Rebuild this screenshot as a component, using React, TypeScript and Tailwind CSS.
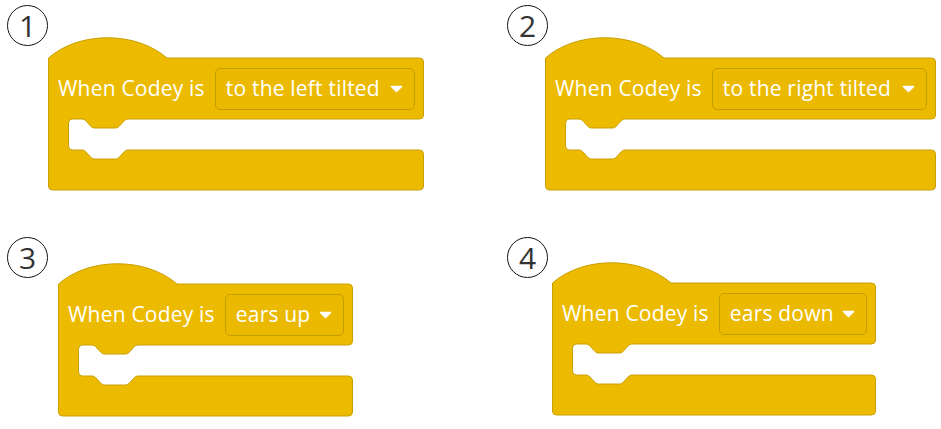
import type { ReactNode } from "react";

const FILL = "#ECBB00";
const EDGE = "#C9A000";

// hat block outline with a C-shaped mouth, body top sits 21px below the svg top
function blockPath(w: number) {
  const R = w - 0.5;
  return [
    "M0.5 21",
    "C31 -6 88 -6 119 21",
    `H${R - 4}`,
    `A4 4 0 0 1 ${R} 25`,
    "V78",
    `A4 4 0 0 1 ${R - 4} 82`,
    "H80",
    "Q78 82 76.5 83.5",
    "L71 89.5",
    "Q69.5 91 67.5 91",
    "H46.5",
    "Q44.5 91 43 89.5",
    "L37.5 83.5",
    "Q36 82 34 82",
    "H24.5",
    "A4 4 0 0 0 20.5 86",
    "V109",
    "A4 4 0 0 0 24.5 113",
    "H34",
    "Q36 113 37.5 114.5",
    "L43 120.5",
    "Q44.5 122 46.5 122",
    "H67.5",
    "Q69.5 122 71 120.5",
    "L76.5 114.5",
    "Q78 113 80 113",
    `H${R - 4}`,
    `A4 4 0 0 1 ${R} 117`,
    "V149",
    `A4 4 0 0 1 ${R - 4} 153`,
    "H4.5",
    "A4 4 0 0 1 0.5 149",
    "Z",
  ].join(" ");
}

function Num({ n }: { n: number }) {
  return (
    <div className="w-[41px] h-[41px] flex-none rounded-full border-[1.5px] border-[#111] flex items-center justify-center text-[30px] leading-none text-[#333] font-['Open_Sans',sans-serif]">
      {n}
    </div>
  );
}

function HatBlock({ width, option }: { width: number; option: string }) {
  return (
    <div className="relative flex-none h-[154px]" style={{ width: width + 1 }}>
      <svg className="absolute inset-0" width={width + 1} height={154} viewBox={`0 0 ${width + 1} 154`}>
        <path d={blockPath(width)} fill={FILL} stroke={EDGE} strokeWidth={1} strokeLinejoin="round" />
      </svg>
      <div className="relative flex items-center gap-[10px] pt-[31px] pl-[10px] pr-[10px] font-['Open_Sans',sans-serif] text-[21px] tracking-[0.2px] text-white">
        <span className="flex-none whitespace-nowrap">When Codey is</span>
        <div className="flex-1 h-[42px] flex items-center justify-between pl-[10px] pr-[11px] rounded-[5px] border border-[#C49D00] bg-[#EBBA00]">
          <span className="whitespace-nowrap">{option}</span>
          <svg width="13" height="8" viewBox="0 0 13 8">
            <path d="M1.5 1.5 H11.5 L6.5 6.5 Z" fill="white" stroke="white" strokeWidth={1.6} strokeLinejoin="round" />
          </svg>
        </div>
      </div>
    </div>
  );
}

function Cell({ children }: { children: ReactNode }) {
  return <div className="flex items-start">{children}</div>;
}

export default function App() {
  return (
    <div className="w-[941px] h-[429px] bg-white overflow-hidden grid grid-cols-[500px_441px] grid-rows-[230px_199px]">
      <Cell>
        <div className="ml-[7px] mt-[5px]">
          <Num n={1} />
        </div>
        <div className="mt-[37px]">
          <HatBlock width={376} option="to the left tilted" />
        </div>
      </Cell>
      <Cell>
        <div className="ml-[7px] mt-[5px]">
          <Num n={2} />
        </div>
        <div className="mt-[37px] -ml-[3px]">
          <HatBlock width={391} option="to the right tilted" />
        </div>
      </Cell>
      <Cell>
        <div className="ml-[7px] mt-[7px]">
          <Num n={3} />
        </div>
        <div className="mt-[33px] ml-[10px]">
          <HatBlock width={295} option="ears up" />
        </div>
      </Cell>
      <Cell>
        <div className="ml-[7px] mt-[7px]">
          <Num n={4} />
        </div>
        <div className="mt-[32px] ml-[4px]">
          <HatBlock width={324} option="ears down" />
        </div>
      </Cell>
    </div>
  );
}
